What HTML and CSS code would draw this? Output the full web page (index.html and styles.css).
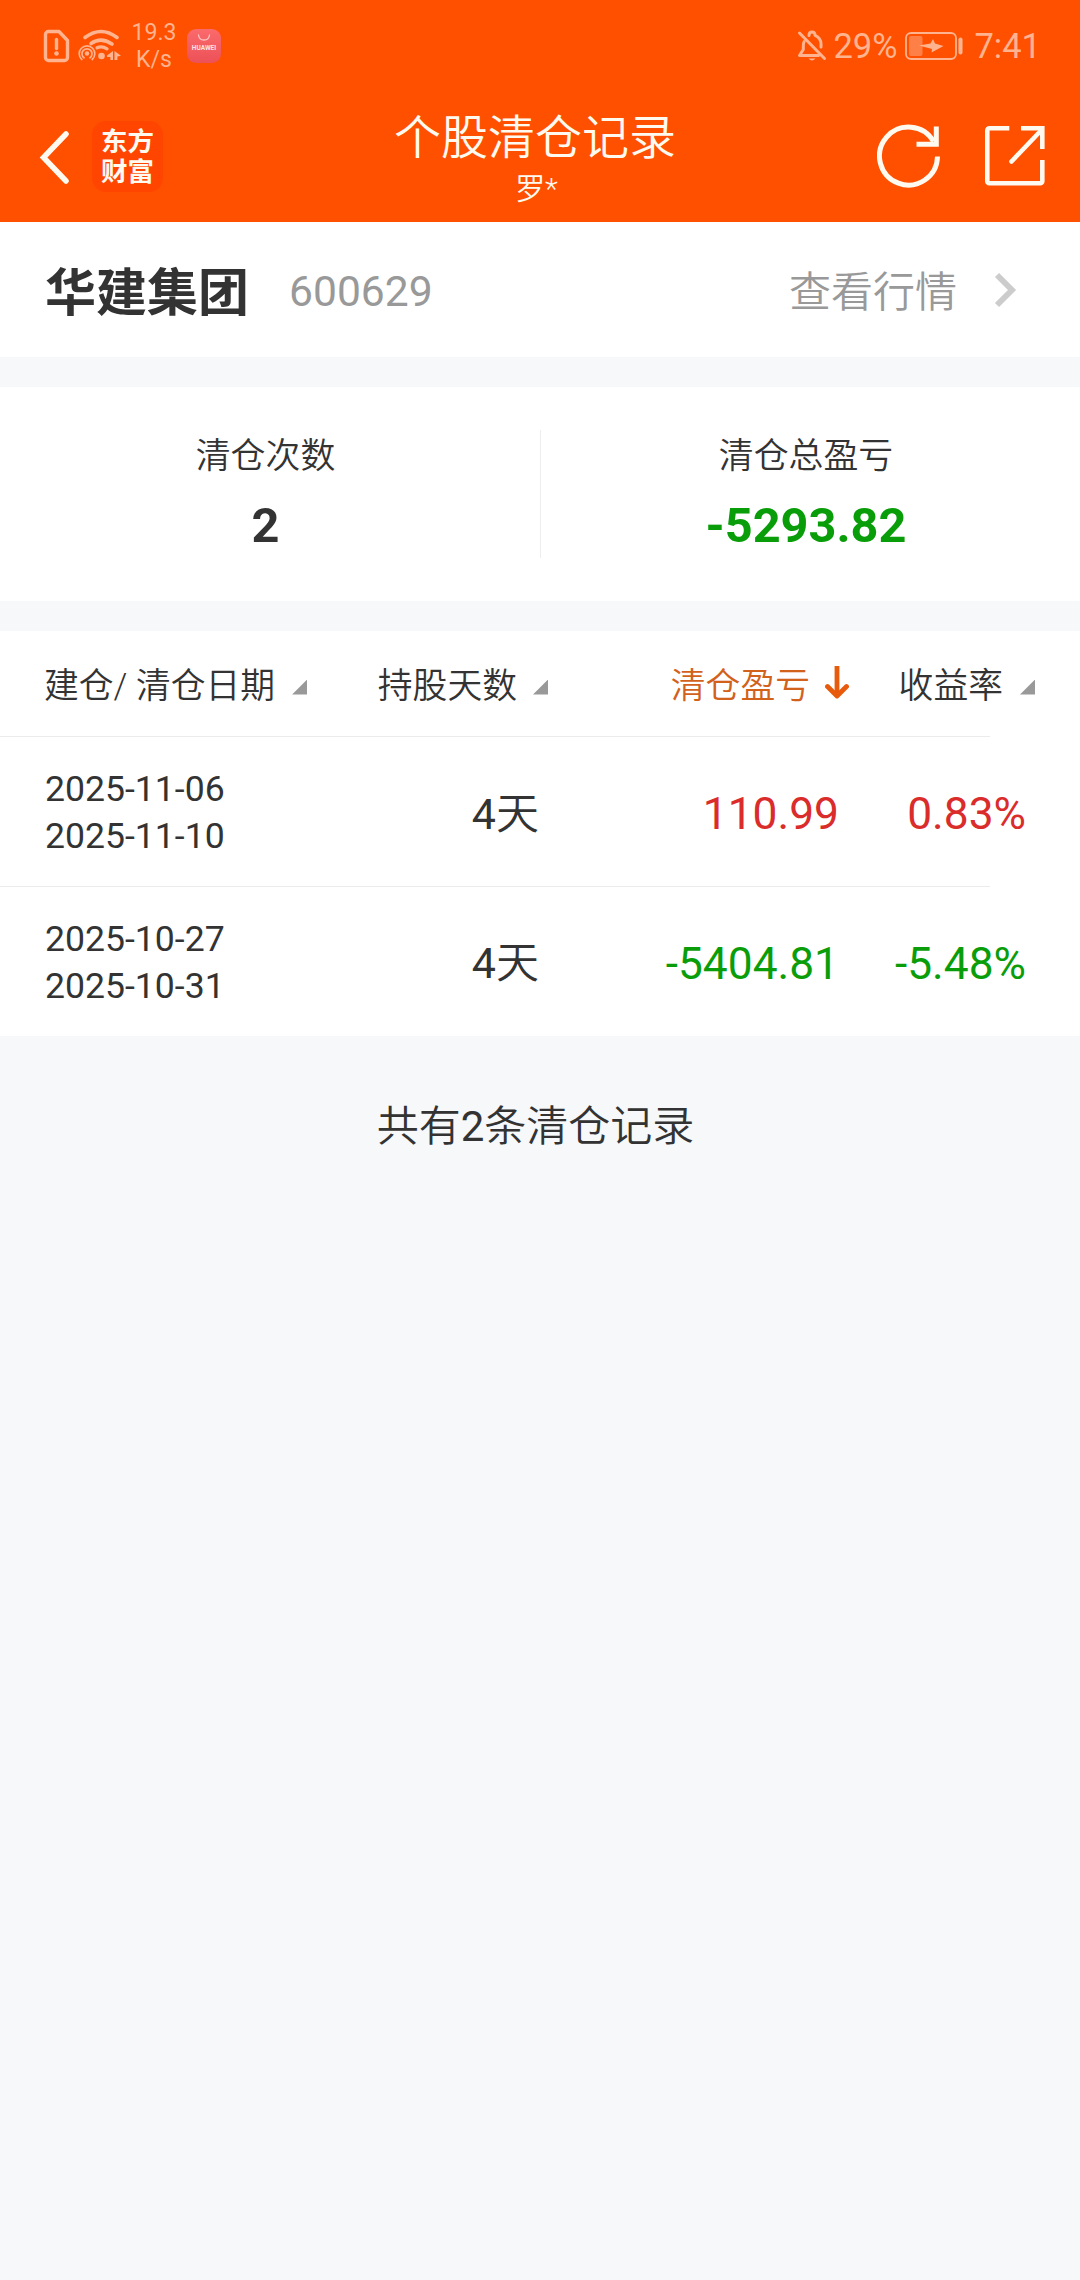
FILE: index.html
```html
<!DOCTYPE html>
<html lang="zh-CN">
<head>
<meta charset="utf-8">
<title>个股清仓记录</title>
<link rel="stylesheet" href="styles.css">
</head>
<body>
<header class="top">
  <div class="status">
    <div class="status-left">
      <svg class="sim" width="28" height="34" viewBox="0 0 28 34" fill="none" stroke="currentColor" stroke-width="3.4" stroke-linejoin="round" stroke-linecap="round">
        <path d="M5.5 2.5H16L24.500 11.500V28.500a3 3 0 0 1-3 3H5.500a3 3 0 0 1-3-3V5.500a3 3 0 0 1 3-3Z"/>
        <path d="M13.500 10.500v9"/><circle cx="13.500" cy="24.500" r="2.300" fill="currentColor" stroke="none"/>
      </svg>
      <svg class="wifi" width="44" height="34" viewBox="0 0 44 34" fill="none" stroke="currentColor" stroke-linecap="round">
        <path stroke-width="3.600" d="M7 8.500Q23 -3.500 39 8.500"/>
        <path stroke-width="3.600" d="M13 14.500Q23 7.500 34 15"/>
        <path stroke-width="3.200" d="M19 18.800Q24 16.500 29 19.800"/>
        <circle cx="23.500" cy="27" r="3.300" fill="currentColor" stroke="none"/>
        <circle cx="9" cy="24.500" r="2.200" fill="currentColor" stroke="none"/>
        <path stroke-width="1.700" d="M6 28.800a5 5 0 1 1 6 0M3.800 30.500a7.800 7.800 0 1 1 10.400 0"/>
        <path fill="currentColor" stroke="none" d="M35 22v9h-2.600v-3h-3.400v-1.400zM36.500 22l6.500 4.800-3.600.7V31H36.500z"/>
      </svg>
      <div class="speed"><span>19.3</span><span>K/s</span></div>
      <div class="store">
        <svg width="14" height="8" viewBox="0 0 14 8" fill="none" stroke="#ffc4c0" stroke-width="1.300" stroke-linecap="round"><path d="M1.500 1Q2 6 7 6T12.500 1"/></svg>
        <span>HUAWEI</span>
      </div>
    </div>
    <div class="status-right">
      <svg width="30" height="34" viewBox="0 0 30 34" fill="none" stroke="currentColor" stroke-width="3" stroke-linecap="round" stroke-linejoin="round">
        <path d="M2.500 4L27.500 29.500"/>
        <path d="M12 6.500Q12 3 15 3T18 6.300Q24 9 24 15V18"/>
        <path d="M7.200 12.500Q6.300 14 6.300 17V20.500L2.500 26.500H21.500"/>
        <path fill="currentColor" stroke="none" d="M11.500 29.500h7q-3.500 4-7 0z"/>
      </svg>
      <span class="percent">29%</span>
      <svg class="battery" width="58" height="30" viewBox="0 0 58 30">
        <rect x="1" y="2" width="50" height="26" rx="5" fill="none" stroke="currentColor" stroke-width="1.800"/>
        <rect x="4" y="5" width="13.500" height="20" rx="2" fill="#ff8046"/>
        <path fill="currentColor" d="M28 8L25.500 12.500 14 14.500 27 18 26.500 21.500 38.500 15 30 12.500z"/>
        <rect x="53.500" y="6.500" width="4" height="17" rx="2" fill="currentColor"/>
      </svg>
      <span class="clock">7:41</span>
    </div>
  </div>
  <nav class="nav">
    <div class="nav-left">
      <svg width="34" height="56" viewBox="0 0 34 56" fill="none" stroke="#fffaf0" stroke-width="5.500" stroke-linecap="round"><path stroke-linejoin="miter" d="M28 5L5.500 28.500 28 52"/></svg>
      <div class="logo"><span>东方</span><span>财富</span></div>
    </div>
    <div class="heading"><h1>个股清仓记录</h1><p>罗*</p></div>
    <div class="nav-right">
      <svg width="64" height="64" viewBox="0 0 64 64" fill="none" stroke="#fffaf0" stroke-width="5">
        <path d="M60.500 32.500A29 29 0 1 1 56.600 17.500"/><path d="M59.300 2.500V20.300H39.500"/>
      </svg>
      <svg width="62" height="62" viewBox="0 0 62 62" fill="none" stroke="#fffaf0" stroke-width="4.600">
        <path d="M25.300 3.300H5.300a2 2 0 0 0-2 2V56.300a2 2 0 0 0 2 2H56.300a2 2 0 0 0 2-2V35"/>
        <path d="M37 3.300H58.300V24"/><path d="M27.500 36.500L57.500 5" stroke-linecap="round"/>
      </svg>
    </div>
  </nav>
</header>

<section class="stock">
  <h2>华建集团</h2><span class="code">600629</span>
  <span class="quote">查看行情</span>
  <svg width="24" height="36" viewBox="0 0 24 36" fill="none" stroke="#ccc" stroke-width="5.800"><path d="M3 3L18 18 3 33"/></svg>
</section>

<section class="stats">
  <div class="stat"><span class="label">清仓次数</span><strong>2</strong></div>
  <div class="stat"><span class="label">清仓总盈亏</span><strong class="down">-5293.82</strong></div>
</section>

<section class="records">
  <div class="row head">
    <div class="first">建仓/ 清仓日期<i class="corner"></i></div>
    <div class="held">持股天数<i class="corner"></i></div>
    <div class="sorted">清仓盈亏<svg width="24" height="34" viewBox="0 0 24 34" fill="none" stroke="#e85a0c" stroke-width="4.800"><path d="M12 0V30"/><path d="M2.500 20.500L12 30 21.500 20.500" stroke-linecap="round" stroke-linejoin="round"/></svg></div>
    <div class="rate">收益率<i class="corner"></i></div>
  </div>
  <div class="row">
    <div class="dates"><span>2025-11-06</span><span>2025-11-10</span></div>
    <div class="days">4<span class="thin">天</span></div><div class="profit up">110.99</div><div class="yield up">0.83%</div>
  </div>
  <div class="row">
    <div class="dates"><span>2025-10-27</span><span>2025-10-31</span></div>
    <div class="days">4<span class="thin">天</span></div><div class="profit down">-5404.81</div><div class="yield down">-5.48%</div>
  </div>
</section>
<footer class="total"><span class="thin">共有</span>2<span class="thin">条清仓记录</span></footer>
</body>
</html>
```
FILE: styles.css
```css
* { box-sizing: border-box; }
body {
  margin: 0;
  min-height: 2280px;
  background: #f6f8fa;
  color: #333;
  font-family: Roboto, "Noto Sans CJK SC", sans-serif;
  font-weight: 400;
}
h1, h2, p { margin: 0; }
svg { display: block; flex: none; }
.thin { font-weight: 350; }

.top { background: #ff5000; color: #fffaf0; height: 222px; }
.status {
  height: 91px;
  display: flex;
  justify-content: space-between;
  padding: 0 39px 0 43px;
  color: #ffb38f;
}
.status-left, .status-right { display: flex; align-items: center; }
.wifi { margin-left: 7px; }
.speed {
  display: flex;
  flex-direction: column;
  align-items: center;
  width: 48px;
  margin-left: 8px;
  font-size: 23px;
  line-height: 27px;
}
.store {
  display: flex;
  flex-direction: column;
  align-items: center;
  width: 34px;
  height: 34px;
  margin-left: 9px;
  padding-top: 5px;
  border-radius: 9px;
  background: linear-gradient(#fb6a6c, #ec5158);
  color: #ffe4e0;
}
.store span { font-size: 6.500px; line-height: 10px; font-weight: 700; margin-top: 1px; }
.percent { font-size: 34.500px; line-height: 40px; margin: 1px 0 0 6px; }
.battery { margin-left: 8px; }
.clock { font-size: 34.500px; line-height: 40px; margin: 1px 0 0 11px; }

.nav {
  height: 131px;
  display: grid;
  grid-template-columns: 1fr auto 1fr;
  align-items: center;
  padding-right: 10px;
}
.nav-left { display: flex; align-items: center; padding-left: 38px; gap: 20px; }
.logo {
  width: 71px;
  height: 71px;
  border-radius: 14px;
  background: #ff4500;
  display: flex;
  flex-direction: column;
  align-items: center;
  justify-content: center;
  font-size: 26.500px;
  line-height: 30px;
  font-weight: 700;
}
.heading { text-align: center; padding-top: 5px; }
.heading h1 { font-size: 47px; line-height: 60px; font-weight: 350; }
.heading p { font-size: 30px; line-height: 42px; padding-left: 3px; font-weight: 350; }
.nav-right { display: flex; align-items: center; justify-content: flex-end; gap: 43px; padding: 0 24px 1px 0; }

.stock {
  height: 135px;
  display: flex;
  align-items: center;
  padding: 0 62px 0 45px;
  background: #fff;
  color: #999;
}
.stock h2 { font-size: 51px; line-height: 60px; padding-top: 8px; font-weight: 700; color: #333; }
.code { font-size: 42.600px; margin: 3px 0 0 40px; }
.quote { font-size: 42px; font-weight: 350; margin: 0 37px 2px auto; }

.stats {
  height: 214px;
  margin-top: 30px;
  display: grid;
  grid-template-columns: 1fr 1fr;
  align-items: center;
  background: #fff;
}
.stat {
  height: 128px;
  display: flex;
  flex-direction: column;
  align-items: center;
  padding: 3px 9px 0 0;
}
.stat + .stat { border-left: 1px solid #eee; }
.label { font-size: 34.900px; line-height: 48px; font-weight: 350; }
.stat strong { font-size: 48.700px; line-height: 60px; margin-top: 15px; }
.up { color: #db2c2c; }
.down { color: #0a9d0a; }

.records { margin-top: 30px; background: #fff; }
.row {
  height: 150px;
  display: grid;
  grid-template-columns: 263px 240px 302px 185px;
  align-items: center;
  padding-left: 45px;
  background: linear-gradient(#ebebeb, #ebebeb) left bottom / 990px 1px no-repeat;
}
.row:last-child { background: none; height: 149px; }
.head { height: 106px; padding-top: 3px; font-size: 34.800px; line-height: 48px; font-weight: 350; }
.head div { display: flex; align-items: center; justify-content: flex-end; gap: 15px; }
.head .first { justify-content: flex-start; gap: 17px; margin-left: -1px; }
.head .held { gap: 16px; }
.head .rate { gap: 17px; }
.head .sorted { color: #d2611c; padding-right: 1px; }
.sorted svg { margin-top: -6px; }
.corner {
  width: 15px;
  height: 15px;
  margin-top: 3px;
  background: #999;
  clip-path: polygon(100% 0, 100% 100%, 0 100%);
}
.dates { display: flex; flex-direction: column; font-size: 35.600px; line-height: 47px; padding-top: 2px; }
.days, .profit, .yield { font-size: 44.300px; line-height: 60px; text-align: right; padding: 4px 9px 0 0; }
.days { font-size: 43px; padding-top: 3px; }
.profit { padding-right: 11px; }

.total { margin-top: 61px; padding-right: 9px; text-align: center; font-size: 42px; line-height: 60px; }
.total .thin { line-height: 1; }
```
